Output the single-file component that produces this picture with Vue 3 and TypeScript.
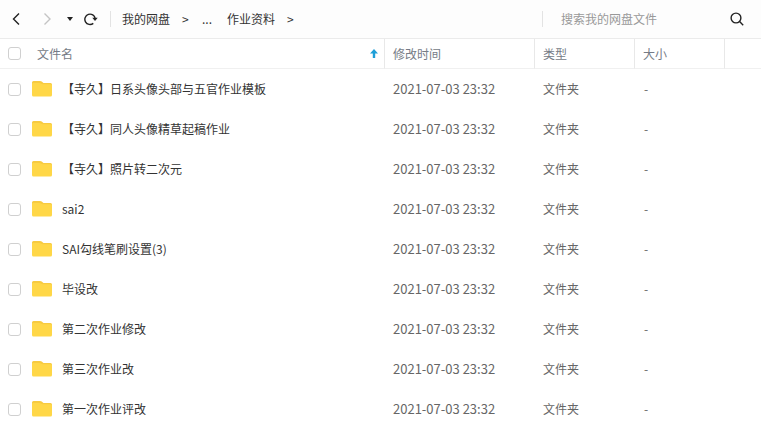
<script setup lang="ts">
import { ref } from 'vue'

interface Entry {
  id: number
  name: string
  modified: string
  type: string
  size: string
}

const names: string[] = [
  '【寺久】日系头像头部与五官作业模板',
  '【寺久】同人头像精草起稿作业',
  '【寺久】照片转二次元',
  'sai2',
  'SAI勾线笔刷设置(3)',
  '毕设改',
  '第二次作业修改',
  '第三次作业改',
  '第一次作业评改',
]

const entries: Entry[] = names.map((name, id) => ({
  id,
  name,
  modified: '2021-07-03 23:32',
  type: '文件夹',
  size: '-',
}))

const selected = ref<number[]>([])
const query = ref('')

function toggleAll(event: Event) {
  const checked = (event.target as HTMLInputElement).checked
  selected.value = checked ? entries.map((entry) => entry.id) : []
}
</script>

<template>
  <main class="drive">
    <header class="toolbar">
      <nav class="history" aria-label="导航">
        <button type="button" class="tool back" aria-label="后退">
          <svg width="8" height="14" viewBox="0 0 8 14"><path d="M7 1.500 1.500 7 7 12.500" /></svg>
        </button>
        <button type="button" class="tool forward" aria-label="前进" disabled>
          <svg width="8" height="14" viewBox="0 0 8 14"><path d="M1.500 1.500 7 7l-5.500 5.500" /></svg>
        </button>
        <button type="button" class="tool recent" aria-label="历史记录">
          <svg width="6" height="4" viewBox="0 0 6 4"><path class="solid" d="M0 0h6L3 4z" /></svg>
        </button>
        <button type="button" class="tool refresh" aria-label="刷新">
          <svg width="14" height="14" viewBox="0 0 14 14">
            <path d="M9.300 11.400A5.200 5.200 0 1 1 11.200 6.600" />
            <path class="solid" d="M8.300 5.800h5.400L11 9z" />
          </svg>
        </button>
      </nav>
      <nav class="crumbs" aria-label="路径">
        <a href="#">我的网盘</a>
        <span class="arrow">&gt;</span>
        <a href="#" class="more">...</a>
        <a href="#">作业资料</a>
        <span class="arrow">&gt;</span>
      </nav>
      <form class="search" role="search" @submit.prevent>
        <input v-model="query" type="text" placeholder="搜索我的网盘文件" aria-label="搜索我的网盘文件" />
        <button type="submit" class="tool" aria-label="搜索">
          <svg width="14" height="14" viewBox="0 0 14 14">
            <circle cx="6" cy="6" r="4.900" />
            <path d="m9.600 9.600 3.600 3.600" />
          </svg>
        </button>
      </form>
    </header>

    <table class="files">
      <colgroup>
        <col />
        <col class="col-time" />
        <col class="col-type" />
        <col class="col-size" />
        <col class="col-rest" />
      </colgroup>
      <thead>
        <tr>
          <th scope="col">
            <div class="name-head">
              <input
                type="checkbox"
                aria-label="全选"
                :checked="selected.length === entries.length"
                @change="toggleAll"
              />
              <span>文件名</span>
              <svg class="sort" width="8" height="9" viewBox="0 0 8 9">
                <path d="M4 0 8 4.500H5.200V9H2.800V4.500H0z" />
              </svg>
            </div>
          </th>
          <th scope="col">修改时间</th>
          <th scope="col">类型</th>
          <th scope="col">大小</th>
          <td></td>
        </tr>
      </thead>
      <tbody>
        <tr v-for="entry in entries" :key="entry.id">
          <td>
            <label class="name">
              <input v-model="selected" type="checkbox" :value="entry.id" />
              <svg class="folder" width="20" height="16" viewBox="0 0 20 16">
                <path class="folder-back" d="M1.500 0H8q1 0 1.700.600L11.500 2H18.500q1.500 0 1.500 1.500V9H0V1.500Q0 0 1.500 0z" />
                <path class="folder-front" d="M0 3.200Q0 2 1.200 2H7q1 0 1.800.500L10.500 3.300H19Q20 3.300 20 4.300V14Q20 15.500 18.500 15.500H1.500Q0 15.500 0 14z" />
              </svg>
              <span>{{ entry.name }}</span>
            </label>
          </td>
          <td class="time">{{ entry.modified }}</td>
          <td>{{ entry.type }}</td>
          <td class="size">{{ entry.size }}</td>
          <td></td>
        </tr>
      </tbody>
    </table>
  </main>
</template>

<style>
body {
  background: #fff;
}
</style>

<style scoped>
.drive {
  color: #333;
  font-family: "Noto Sans CJK SC", "Noto Sans", sans-serif;
  font-size: 12px;
  line-height: 18px;
}

.toolbar {
  display: flex;
  align-items: center;
  box-sizing: border-box;
  height: 39px;
  border-bottom: 1px solid #ebebeb;
  background: #fdfdfd;
}

.history {
  display: flex;
  align-items: center;
  box-sizing: border-box;
  width: 111px;
  height: 16px;
  padding-left: 12px;
  border-right: 1px solid #e3e3e3;
}

.tool {
  display: flex;
  padding: 0;
  border: 0;
  background: none;
  color: #222;
}

.tool svg {
  fill: none;
  stroke: currentColor;
  stroke-width: 1.4;
}

.tool .solid {
  fill: currentColor;
  stroke: none;
}

.forward {
  margin-left: 23px;
  color: #c4c4c4;
}

.recent {
  margin-left: 16px;
}

.refresh {
  margin-left: 11px;
}

.crumbs {
  display: flex;
  flex: 1;
  align-items: center;
  padding-left: 11px;
}

.crumbs a {
  color: inherit;
  text-decoration: none;
}

.arrow {
  width: 8px;
  margin: 0 12px;
}

.crumbs .more {
  width: 10px;
  margin-right: 15px;
}

.search {
  display: flex;
  align-items: center;
  box-sizing: border-box;
  width: 219px;
  height: 16px;
  padding: 0 17px 0 18px;
  border-left: 1px solid #e3e3e3;
}

.search input {
  flex: 1;
  min-width: 0;
  padding: 0;
  border: 0;
  outline: 0;
  background: none;
  color: #333;
  font: inherit;
}

.search input::placeholder {
  color: #999;
}

.files {
  width: 100%;
  border-collapse: separate;
  border-spacing: 0;
  table-layout: fixed;
}

.col-time {
  width: 150px;
}

.col-type {
  width: 100px;
}

.col-size {
  width: 90px;
}

.col-rest {
  width: 36px;
}

.files th,
.files td {
  box-sizing: border-box;
  height: 40px;
  padding: 0 8px;
  color: #666;
  font-weight: 400;
  text-align: left;
  white-space: nowrap;
}

.files thead th,
.files thead td {
  height: 30px;
  border-bottom: 1px solid #f0f0f0;
  color: #757b86;
}

.files thead th {
  border-right: 1px solid #e8e8e8;
}

.name-head,
.name {
  display: flex;
  align-items: center;
}

.name {
  gap: 10px;
  color: #333;
}

.name-head {
  gap: 16px;
}

.files input {
  box-sizing: border-box;
  width: 13px;
  height: 13px;
  margin: 0;
  border: 1px solid #d0d0d0;
  border-radius: 3px;
  background: #fff;
  appearance: none;
}

.files input:checked {
  border-color: #06a7ff;
  background: #06a7ff;
}

.sort {
  margin-left: auto;
  margin-right: -2px;
  fill: #1e9fd8;
}

.folder {
  margin-left: 1px;
}

.folder-back {
  fill: #f7ca40;
}

.folder-front {
  fill: #ffd747;
}

.files .time {
  font-size: 13px;
}

.files .size {
  padding-left: 9px;
}
</style>
